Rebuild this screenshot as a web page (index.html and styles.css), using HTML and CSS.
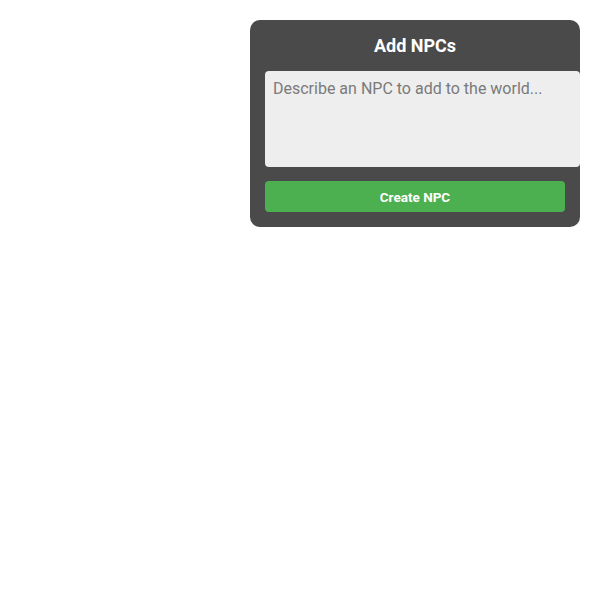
FILE: index.html
```
<!DOCTYPE html>
<html>
<head>
<meta charset="utf-8">
<link rel="stylesheet" href="styles.css">
</head>
<body>
<div class="page">
  <div class="panel">
    <h2 class="title">Add NPCs</h2>
    <textarea class="desc" placeholder="Describe an NPC to add to the world..."></textarea>
    <button class="create">Create NPC</button>
  </div>
</div>
</body>
</html>
```
FILE: styles.css
```
html, body {
  margin: 0;
  padding: 0;
  background: #ffffff;
  font-family: Roboto, "Liberation Sans", sans-serif;
}
.page {
  display: flex;
  justify-content: flex-end;
  padding: 20px 20px 0 0;
}
.panel {
  width: 330px;
  box-sizing: border-box;
  background: #4a4a4a;
  border-radius: 10px;
  padding: 15px;
  display: flex;
  flex-direction: column;
  overflow: hidden;
}
.title {
  margin: 0 0 14px 0;
  color: #ffffff;
  font-size: 18px;
  line-height: 22px;
  font-weight: 700;
  text-align: center;
}
.desc {
  width: 315px;
  height: 96px;
  box-sizing: border-box;
  margin: 0;
  padding: 8px;
  border: none;
  border-radius: 4px;
  background: #eeeeee;
  font-family: Roboto, "Liberation Sans", sans-serif;
  font-size: 16px;
  line-height: 19px;
  resize: none;
  outline: none;
}
.desc::placeholder {
  color: #7a7a7a;
}
.create {
  margin-top: 14px;
  height: 31px;
  width: 300px;
  border: none;
  border-radius: 4px;
  background: #4caf50;
  color: #ffffff;
  font-family: Roboto, "Liberation Sans", sans-serif;
  font-size: 13.5px;
  font-weight: 700;
}
```
